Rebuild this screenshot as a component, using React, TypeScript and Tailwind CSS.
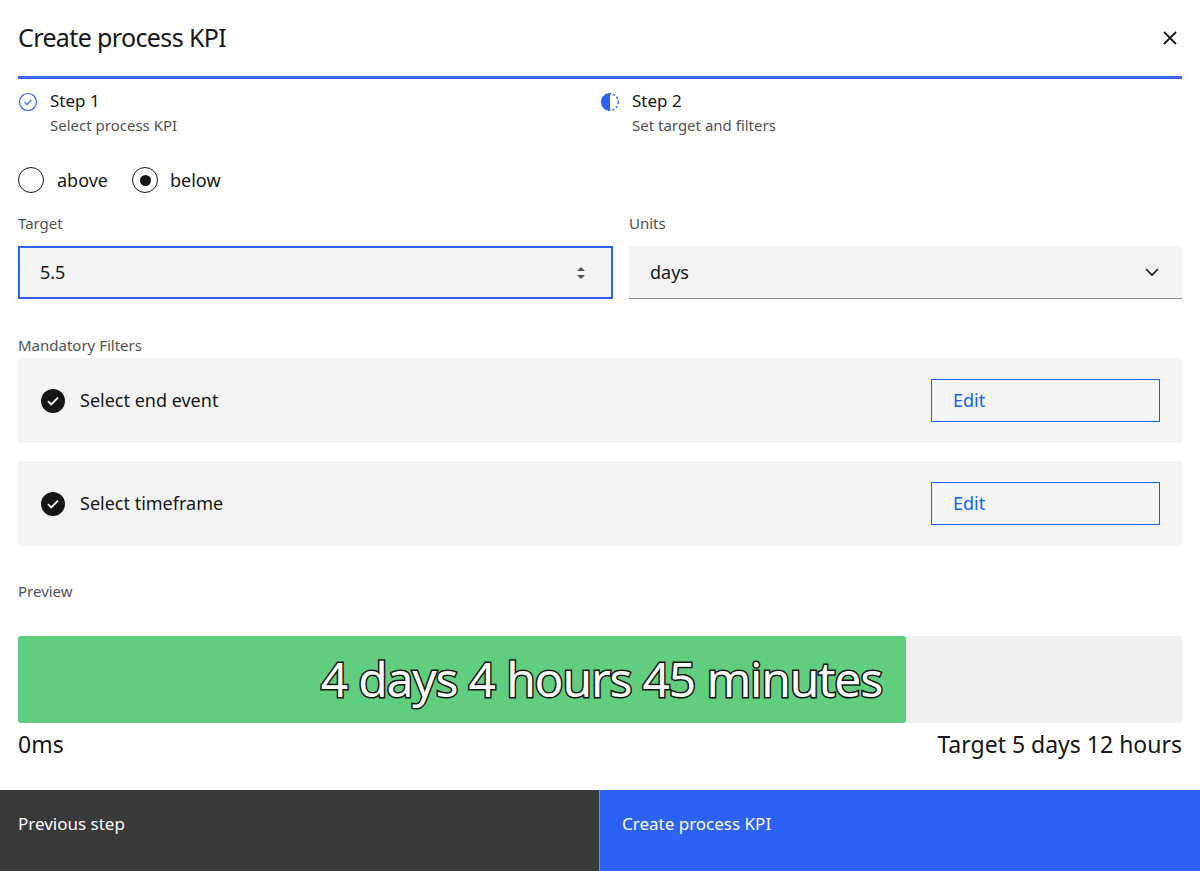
import * as React from "react";

const CheckDot = () => (
  <svg width="26" height="26" viewBox="0 0 26 26">
    <circle cx="13" cy="13" r="12" fill="#161616" />
    <path d="M8 13.2l3.2 3.2L18 9.6" fill="none" stroke="#fff" strokeWidth="1.8" />
  </svg>
);

function FilterRow({ label }: { label: string }) {
  return (
    <div className="h-[85px] bg-[#f4f4f4] flex items-center pl-[22px] pr-[22px]">
      <CheckDot />
      <span className="ml-[14px] text-[18px] text-[#161616]">{label}</span>
      <button className="ml-auto w-[229px] h-[43px] border border-[#0f62fe] text-[#0f62fe] text-[18px] text-left pl-[21px]">
        Edit
      </button>
    </div>
  );
}

export default function App() {
  return (
    <div className="w-[1200px] h-[871px] bg-white flex flex-col text-[#161616] font-['Noto_Sans',sans-serif] overflow-hidden">
      <div className="px-[18px] flex-1">
        <div className="flex items-center justify-between pt-[20px] h-[76px] pb-[20px]">
          <h1 className="text-[25px] tracking-tight">Create process KPI</h1>
          <svg width="16" height="16" viewBox="0 0 16 16" className="mr-[4px]">
            <path d="M2 2l12 12M14 2L2 14" stroke="#161616" strokeWidth="1.8" />
          </svg>
        </div>
        <div className="h-[3px] bg-[#3b66f5]" />
        <div className="grid grid-cols-2 pt-[10px]">
          <div className="flex">
            <svg width="20" height="20" viewBox="0 0 20 20" className="mt-[3px]">
              <circle cx="10" cy="10" r="8.5" fill="none" stroke="#2c62f6" strokeWidth="1.2" />
              <path d="M6.5 10.2l2.4 2.4 4.6-5" fill="none" stroke="#2c62f6" strokeWidth="1.2" />
            </svg>
            <div className="ml-[12px]">
              <div className="text-[17px] leading-[24px]">Step 1</div>
              <div className="text-[15px] text-[#525252] leading-[24px]">Select process KPI</div>
            </div>
          </div>
          <div className="flex">
            <svg width="22" height="22" viewBox="0 0 22 22" className="mt-[2px] -ml-[1px]">
              <path d="M11 2a9 9 0 0 0 0 18z" fill="#2c62f6" />
              <circle cx="11" cy="11" r="8.3" fill="none" stroke="#2c62f6" strokeWidth="1.4" strokeDasharray="2.2 2" />
            </svg>
            <div className="ml-[11px]">
              <div className="text-[17px] leading-[24px]">Step 2</div>
              <div className="text-[15px] text-[#525252] leading-[24px]">Set target and filters</div>
            </div>
          </div>
        </div>
        <div className="flex items-center mt-[28px] h-[30px] text-[18px]">
          <span className="w-[26px] h-[26px] rounded-full border-[1.5px] border-[#161616]" />
          <span className="ml-[13px]">above</span>
          <span className="ml-[24px] w-[26px] h-[26px] rounded-full border-[1.5px] border-[#161616] flex items-center justify-center">
            <span className="w-[11px] h-[11px] rounded-full bg-[#161616]" />
          </span>
          <span className="ml-[12px]">below</span>
        </div>
        <div className="grid grid-cols-[595px_1fr] gap-x-[16px] mt-[17px]">
          <div>
            <div className="text-[15px] text-[#525252] h-[34px]">Target</div>
            <div className="h-[53px] bg-[#f4f4f4] border-2 border-[#2c62f6] flex items-center px-[20px] text-[18px]">
              5.5
              <svg width="12" height="20" viewBox="0 0 12 20" className="ml-auto mr-[4px]">
                <path d="M2 8l4-4 4 4z" fill="#525252" />
                <path d="M2 12l4 4 4-4z" fill="#525252" />
              </svg>
            </div>
          </div>
          <div>
            <div className="text-[15px] text-[#525252] h-[34px]">Units</div>
            <div className="h-[53px] bg-[#f4f4f4] border-b border-[#8d8d8d] flex items-center px-[21px] text-[18px]">
              days
              <svg width="16" height="16" viewBox="0 0 16 16" className="ml-auto mr-[1px]">
                <path d="M2 5l6 6 6-6" fill="none" stroke="#161616" strokeWidth="1.6" />
              </svg>
            </div>
          </div>
        </div>
        <div className="text-[15px] text-[#525252] mt-[35px] h-[24px]">Mandatory Filters</div>
        <div className="flex flex-col gap-[18px]">
          <FilterRow label="Select end event" />
          <FilterRow label="Select timeframe" />
        </div>
        <div className="text-[15px] text-[#525252] mt-[34px]">Preview</div>
        <div className="mt-[33px] h-[87px] bg-[#efefef] rounded-[3px] flex">
          <div className="w-[888px] bg-[#61cd7e] rounded-[3px] flex items-center justify-end pr-[24px]">
            <span className="text-[48px] text-white [-webkit-text-stroke:3px_#111] [paint-order:stroke_fill] tracking-tight">
              4 days 4 hours 45 minutes
            </span>
          </div>
        </div>
        <div className="flex justify-between text-[23px] mt-[4px]">
          <span>0ms</span>
          <span>Target 5 days 12 hours</span>
        </div>
      </div>
      <div className="grid grid-cols-2 h-[81px] text-[17px] text-white">
        <div className="bg-[#393939] pl-[18px] pt-[21px] border-r border-[#8d8d8d]">Previous step</div>
        <div className="bg-[#2c62f6] pl-[22px] pt-[21px]">Create process KPI</div>
      </div>
    </div>
  );
}
